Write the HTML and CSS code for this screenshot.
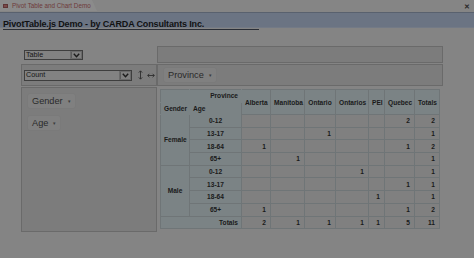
FILE: index.html
```html
<!DOCTYPE html>
<html>
<head>
<meta charset="utf-8">
<link rel="stylesheet" href="styles.css">
</head>
<body>
<div class="tabstrip">
  <div class="tab"><span class="tab-icon"></span><span class="tab-label">Pivot Table and Chart Demo</span></div>
  <span class="close">✕</span>
</div>
<div class="titlebar"><span class="title">PivotTable.js Demo - by CARDA Consultants Inc.</span></div>
<div class="form">
  <div class="pvt">
    <div class="renderer-cell">
      <div class="select renderer"><span class="select-text">Table</span><span class="select-btn"><svg width="7" height="5" viewBox="0 0 7 5"><polyline points="0.8,0.8 3.5,3.8 6.2,0.8" fill="none" stroke="#1c1c1c" stroke-width="1.4"/></svg></span></div>
    </div>
    <div class="axis unused"></div>
    <div class="axis agg">
      <div class="select aggregator"><span class="select-text">Count</span><span class="select-btn"><svg width="7" height="5" viewBox="0 0 7 5"><polyline points="0.8,0.8 3.5,3.8 6.2,0.8" fill="none" stroke="#1c1c1c" stroke-width="1.4"/></svg></span></div>
      <span class="sort"><svg width="5" height="10" viewBox="0 0 5 10"><path d="M2.5 1V9M0.8 2.6L2.5 0.8L4.2 2.6M0.8 7.4L2.5 9.2L4.2 7.4" fill="none" stroke="#2c2c2c" stroke-width="0.9"/></svg></span>
      <span class="sort wide"><svg width="8" height="5" viewBox="0 0 8 5"><path d="M0.8 2.5H7.2M2.4 0.8L0.7 2.5L2.4 4.2M5.6 0.8L7.3 2.5L5.6 4.2" fill="none" stroke="#2c2c2c" stroke-width="0.9"/></svg></span>
    </div>
    <div class="axis cols">
      <span class="pill">Province<span class="tri">▾</span></span>
    </div>
    <div class="axis rows">
      <span class="pill">Gender<span class="tri">▾</span></span>
      <span class="pill">Age<span class="tri">▾</span></span>
    </div>
    <div class="output">
      <table class="pvtTable">
        <colgroup>
          <col class="c-gender"><col class="c-age"><col class="c-alb"><col class="c-man"><col class="c-ont"><col class="c-onts"><col class="c-pei"><col class="c-que"><col class="c-tot">
        </colgroup>
        <thead>
          <tr class="hrow">
            <th class="corner"></th>
            <th class="corner axis-label right">Province</th>
            <th class="col-label" rowspan="2">Alberta</th>
            <th class="col-label" rowspan="2">Manitoba</th>
            <th class="col-label" rowspan="2">Ontario</th>
            <th class="col-label" rowspan="2">Ontarios</th>
            <th class="col-label" rowspan="2">PEI</th>
            <th class="col-label" rowspan="2">Quebec</th>
            <th class="col-label" rowspan="2">Totals</th>
          </tr>
          <tr class="hrow">
            <th class="corner axis-label">Gender</th>
            <th class="corner axis-label">Age</th>
          </tr>
        </thead>
        <tbody>
          <tr><th class="row-label" rowspan="4">Female</th><th class="row-label">0-12</th><td></td><td></td><td></td><td></td><td></td><td>2</td><td>2</td></tr>
          <tr><th class="row-label">13-17</th><td></td><td></td><td>1</td><td></td><td></td><td></td><td>1</td></tr>
          <tr><th class="row-label">18-64</th><td>1</td><td></td><td></td><td></td><td></td><td>1</td><td>2</td></tr>
          <tr><th class="row-label">65+</th><td></td><td>1</td><td></td><td></td><td></td><td></td><td>1</td></tr>
          <tr><th class="row-label" rowspan="4">Male</th><th class="row-label">0-12</th><td></td><td></td><td></td><td>1</td><td></td><td></td><td>1</td></tr>
          <tr><th class="row-label">13-17</th><td></td><td></td><td></td><td></td><td></td><td>1</td><td>1</td></tr>
          <tr><th class="row-label">18-64</th><td></td><td></td><td></td><td></td><td>1</td><td></td><td>1</td></tr>
          <tr><th class="row-label">65+</th><td>1</td><td></td><td></td><td></td><td></td><td>1</td><td>2</td></tr>
          <tr><th class="total-label" colspan="2">Totals</th><td>2</td><td>1</td><td>1</td><td>1</td><td>1</td><td>5</td><td>11</td></tr>
        </tbody>
      </table>
    </div>
  </div>
</div>
</body>
</html>
```
FILE: styles.css
```css
html, body {
  margin: 0;
  padding: 0;
}
body {
  width: 474px;
  height: 258px;
  overflow: hidden;
  background: #848484;
  font-family: "Liberation Sans", Arial, sans-serif;
  color: #1c1c1c;
}

/* tab strip */
.tabstrip {
  height: 12px;
  display: flex;
  justify-content: space-between;
  align-items: flex-start;
  background: #858585;
}
.tab {
  width: 97px;
  height: 11px;
  background: #8b8b8b;
  clip-path: polygon(0 0, 92px 0, 97px 100%, 0 100%);
  display: flex;
  align-items: center;
  gap: 4px;
  padding-left: 3px;
  box-sizing: border-box;
}
.tab-icon {
  width: 5px;
  height: 4px;
  background: #7a4a4a;
  border: 1px solid #5e3434;
  box-sizing: border-box;
}
.tab-label {
  font-size: 6.3px;
  color: #6e3a3a;
  white-space: nowrap;
}
.close {
  font-size: 7px;
  line-height: 7px;
  margin: 3px 4px 0 0;
  color: #2a2a2a;
  font-weight: bold;
}

/* title bar */
.titlebar {
  height: 14px;
  background: #6b7483;
  border-top: 1px solid #59616e;
  border-bottom: 1px solid #737a86;
}
.title {
  display: inline-block;
  width: 256px;
  margin: 1px 0 0 3px;
  font-size: 9px;
  line-height: 10px;
  font-weight: bold;
  letter-spacing: -0.15px;
  color: #121212;
  border-bottom: 1px solid #2a2e36;
  white-space: nowrap;
}

/* form */
.form {
  padding: 18px 0 0 21px;
}
.pvt {
  display: grid;
  grid-template-columns: 136px 286px;
  grid-template-rows: 17px 22px 145px;
  row-gap: 1px;
}
.axis {
  background: #7c7c7c;
  border: 1px solid #6a6a6a;
  box-sizing: border-box;
}
.renderer-cell {
  padding: 4px 0 0 3px;
}
.select {
  display: flex;
  align-items: stretch;
  box-sizing: border-box;
  border: 1px solid #3e3e3e;
  background: #828282;
  font-size: 7.2px;
  color: #161616;
}
.select-text {
  flex: 1;
  padding-left: 1px;
  line-height: 8px;
}
.select-btn {
  width: 9px;
  display: flex;
  align-items: center;
  justify-content: center;
  border-left: 1px solid #5c5c5c;
  margin: 1px;
  background: #808080;
  outline: 1px solid #6a6a6a;
}
.renderer {
  width: 59px;
  height: 10px;
}
.agg {
  display: flex;
  align-items: center;
  padding: 0 0 0 2px;
}
.aggregator {
  width: 108px;
  height: 11px;
}
.sort {
  display: flex;
  margin-left: 6px;
}
.sort.wide {
  margin-left: 4px;
}
.cols {
  display: flex;
  align-items: center;
  padding-left: 5px;
}
.rows {
  display: flex;
  flex-direction: column;
  align-items: flex-start;
  gap: 6px;
  padding: 5px 0 0 5px;
}
.pill {
  display: inline-flex;
  align-items: center;
  padding: 2px 4px 2px 4px;
  background: #808080;
  border: 1px solid #7a7a7a;
  border-radius: 3px;
  font-size: 9.2px;
  line-height: 10px;
  color: #2a2a2a;
}
.tri {
  font-size: 5px;
  margin-left: 5px;
  color: #3a3a3a;
}

/* output table */
.output {
  padding: 2px 0 0 3px;
}
.pvtTable {
  border-collapse: collapse;
  table-layout: fixed;
  width: 279px;
  font-size: 6.6px;
  font-weight: bold;
  color: #1a1a1a;
}
.c-gender { width: 29px; }
.c-age { width: 52px; }
.c-alb { width: 29px; }
.c-man { width: 34px; }
.c-ont { width: 31px; }
.c-onts { width: 33px; }
.c-pei { width: 16px; }
.c-que { width: 30px; }
.c-tot { width: 25px; }

.pvtTable th,
.pvtTable td {
  padding: 0 3px;
  border: 1px solid #6f7577;
  white-space: nowrap;
  overflow: hidden;
}
.pvtTable th {
  background: #7b8385;
}
.pvtTable td {
  background: #808080;
  text-align: right;
  padding-right: 4px;
}
.hrow th {
  height: 11.5px;
}
.pvtTable tbody tr td,
.pvtTable tbody tr th {
  height: 11.7px;
}
.corner {
  border-color: #7b8385 !important;
  border-left-color: #6f7577 !important;
  border-top-color: #6f7577 !important;
}
.axis-label {
  text-align: left;
}
.axis-label.right {
  text-align: right;
}
.col-label {
  text-align: center;
}
.row-label {
  text-align: center;
}
.total-label {
  text-align: right;
}
```
